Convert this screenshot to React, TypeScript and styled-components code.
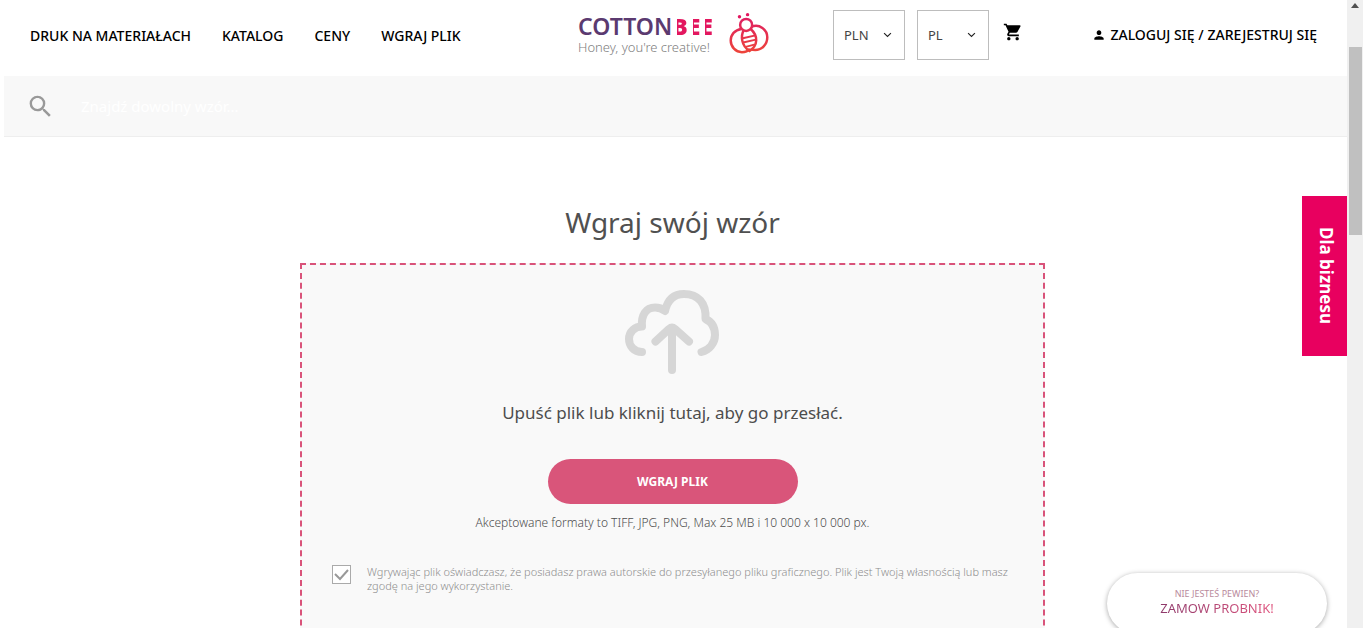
import React from "react";
import styled, { createGlobalStyle } from "styled-components";
import { MdSearch, MdShoppingCart, MdPerson } from "react-icons/md";

const GlobalStyle = createGlobalStyle`
  *, *::before, *::after { box-sizing: border-box; }
  body {
    margin: 0;
    background: #fff;
    color: #4d4d4d;
    font-family: "Noto Sans", "Open Sans", sans-serif;
  }
`;

const Shell = styled.div`
  display: grid;
  grid-template-columns: minmax(0, 1fr) 16px;
  height: 100vh;
  padding: 0 3px 1px 0;
  overflow: hidden;
`;

const Page = styled.div`
  position: relative;
  overflow: hidden;
`;

const Header = styled.header`
  display: grid;
  grid-template-columns: 1fr auto 1fr;
  align-items: center;
  height: 76px;
  padding: 0 30px;
`;

const Nav = styled.nav`
  display: flex;
  gap: 31px;
  padding-bottom: 4px;
`;

const NavLink = styled.a`
  color: #000;
  font-size: 14px;
  font-weight: 500;
  line-height: 20px;
  text-decoration: none;
  white-space: nowrap;
`;

const Logo = styled.a`
  display: flex;
  align-items: center;
  gap: 16px;
  padding-bottom: 9px;
  text-decoration: none;
`;

const Wordmark = styled.span`
  display: flex;
  color: #5b3a70;
  font-size: 23px;
  font-weight: 600;
  line-height: 26px;
`;

const StripedLetters = styled.span`
  display: flex;
  color: transparent;
  font-weight: 900;
`;

const StripedLetter = styled.span`
  background: linear-gradient(90deg, transparent 5px, #e3175f 5px);
  background-clip: text;
  -webkit-background-clip: text;
`;

const Tagline = styled.span`
  display: block;
  color: #808080;
  font-size: 13px;
  font-weight: 300;
  line-height: 16px;
`;

const Tools = styled.div`
  display: flex;
  align-items: center;
  padding: 0 0 6px 64px;
`;

const SelectBox = styled.div`
  position: relative;
  margin-right: 12px;
`;

const Select = styled.select`
  display: block;
  width: 72px;
  height: 50px;
  padding: 0 10px;
  border: 1px solid #bdbdbd;
  border-radius: 0;
  background: #fff;
  color: #444;
  font-family: inherit;
  font-size: 13px;
  font-weight: 400;
  appearance: none;
`;

const Chevron = styled.svg`
  position: absolute;
  top: 22px;
  right: 13px;
  width: 9px;
  height: 6px;
  pointer-events: none;
`;

const CartButton = styled.button`
  display: flex;
  padding: 0 0 6px;
  margin-left: 2px;
  border: 0;
  background: none;
  color: #000;
  font-size: 20px;
`;

const Account = styled.div`
  display: flex;
  align-items: center;
  margin-left: auto;
  gap: 4px;
  color: #000;
  font-size: 14px;
`;

const SearchBar = styled.form`
  display: flex;
  align-items: center;
  gap: 24px;
  height: 61px;
  margin-left: 4px;
  padding: 0 22px;
  border-bottom: 1px solid #eee;
  background: #f8f8f8;
  color: #999;
  font-size: 29px;
`;

const SearchInput = styled.input`
  flex: 1;
  border: 0;
  background: none;
  color: #555;
  font-family: inherit;
  font-size: 15px;
  &::placeholder { color: #fff; opacity: 1; }
`;

const Main = styled.main`
  display: flex;
  flex-direction: column;
  align-items: center;
  padding: 65px 2px 0 0;
`;

const Title = styled.h1`
  margin: 0 0 21px;
  color: #505050;
  font-size: 28px;
  font-weight: 400;
  line-height: 40px;
`;

const DropZone = styled.section`
  display: flex;
  flex-direction: column;
  align-items: center;
  width: 100%;
  max-width: 745px;
  padding: 24px 30px 80px;
  border: 2px dashed #d9537a;
  background: #f9f9f9;
`;

const DropHint = styled.p`
  margin: 26px 0 34px;
  font-size: 17px;
  line-height: 24px;
`;

const UploadButton = styled.button`
  width: 250px;
  height: 45px;
  border: 0;
  border-radius: 23px;
  background: #d9557a;
  color: #fff;
  font-family: inherit;
  font-size: 12px;
  font-weight: 700;
`;

const Formats = styled.p`
  margin: 9px 0 32px;
  font-size: 12px;
  font-weight: 300;
  line-height: 20px;
`;

const Consent = styled.label`
  display: flex;
  align-self: stretch;
  gap: 16px;
  color: #8e8e8e;
  font-size: 11px;
  font-weight: 300;
  line-height: 14px;
`;

const CheckFrame = styled.span`
  position: relative;
  flex: none;
  width: 19px;
  height: 19px;
`;

const Checkbox = styled.input`
  display: block;
  width: 19px;
  height: 19px;
  margin: 0;
  border: 1px solid #aaa;
  background: #fff;
  appearance: none;
`;

const Tick = styled.svg`
  position: absolute;
  inset: 0;
  pointer-events: none;
  visibility: hidden;
  ${Checkbox}:checked + & { visibility: visible; }
`;

const BusinessTab = styled.a`
  position: absolute;
  top: 196px;
  right: 0;
  display: flex;
  align-items: center;
  justify-content: center;
  width: 45px;
  height: 160px;
  padding-left: 4px;
  background: #e8005f;
  color: #fff;
  font-size: 17px;
  font-weight: 700;
  text-decoration: none;
  writing-mode: vertical-rl;
`;

const SampleOffer = styled.a`
  position: absolute;
  right: 20px;
  bottom: -6px;
  display: flex;
  flex-direction: column;
  align-items: center;
  width: 220px;
  height: 61px;
  padding-top: 14px;
  border-radius: 31px;
  background: #fff;
  box-shadow: 0 1px 5px rgba(0, 0, 0, 0.35);
  text-decoration: none;
`;

const OfferLead = styled.span`
  color: #b98a9c;
  font-size: 9px;
  line-height: 13px;
`;

const OfferText = styled.span`
  background: linear-gradient(90deg, #8e3a6b, #e0557f);
  background-clip: text;
  -webkit-background-clip: text;
  color: transparent;
  font-size: 13px;
  line-height: 17px;
`;

const ScrollTrack = styled.div`
  display: flex;
  flex-direction: column;
  align-items: center;
  padding-top: 3px;
  background: #f0f0f0;
`;

const ScrollThumb = styled.div`
  width: 13px;
  height: 30%;
  margin-top: 39px;
  background: #c0c0c0;
`;

const navItems = ["DRUK NA MATERIAŁACH", "KATALOG", "CENY", "WGRAJ PLIK"];

function Picker({ label, options }: { label: string; options: string[] }) {
  return (
    <SelectBox>
      <Select aria-label={label}>
        {options.map((option) => (
          <option key={option}>{option}</option>
        ))}
      </Select>
      <Chevron viewBox="0 0 10 7" aria-hidden="true">
        <path d="M1 1.2 5 5.2 9 1.2" fill="none" stroke="#222" strokeWidth="1.3" />
      </Chevron>
    </SelectBox>
  );
}

function BeeMark() {
  return (
    <svg width="40" height="43" viewBox="0 0 42 44" fill="none" aria-hidden="true">
      <defs>
        <linearGradient id="bee" gradientUnits="userSpaceOnUse" x1="0" y1="0" x2="0" y2="44">
          <stop offset="0" stopColor="#dc1a68" />
          <stop offset="1" stopColor="#ee4638" />
        </linearGradient>
      </defs>
      <g stroke="url(#bee)" strokeWidth="2.6">
        <circle cx="18" cy="13" r="6.3" />
        <path d="M13 17.200C6 18 1.800 23.400 1.800 29.400C1.800 36 7 41.600 13.500 41.600C17 41.600 20.200 40.200 22 38" />
        <path d="M23.500 15C32 11.500 40.200 18 40.200 26C40.200 33.600 34.300 39.400 27.600 39.400C25.500 39.400 24 39 22.500 38.200" />
        <path d="M15.500 18.500C12.200 24.500 12.600 34.500 21.500 40.400C30.600 34.500 30.800 24.500 22.800 17.300" />
        <path d="M14.500 27 27.800 24M14.800 31.500 28.200 28.500M17.500 36 26.500 33.600" strokeWidth="2" />
      </g>
      <circle cx="11" cy="4.500" r="1.800" fill="#e3175f" />
      <circle cx="19.500" cy="2.200" r="1.800" fill="#e3175f" />
    </svg>
  );
}

function CloudUpload() {
  return (
    <svg width="98" height="86" viewBox="0 0 98 86" fill="none" stroke="#d6d6d6" strokeWidth="8" strokeLinecap="round" strokeLinejoin="round" aria-hidden="true">
      <path d="M18 63C10 63 5 57 5 50C5 42.500 11 37.500 18 37.500C17 26 22 18.500 31 18.500C35 18.500 38 19.500 41 22C43.500 11 50 5 60 5C74 5 82.500 14 81.500 30C88 33 91 39 91 46C91 54.500 85 61 77.500 63" />
      <path d="M48 81V42M31.500 52.500 45 40Q48 37.500 51 40L65 52.500" />
    </svg>
  );
}

export default function App() {
  return (
    <>
      <GlobalStyle />
      <Shell>
        <Page>
          <Header>
            <Nav>
              {navItems.map((item) => (
                <NavLink key={item} href="#">{item}</NavLink>
              ))}
            </Nav>
            <Logo href="#">
              <span>
                <Wordmark>
                  COTTON
                  <StripedLetters>
                    <StripedLetter>B</StripedLetter>
                    <StripedLetter>E</StripedLetter>
                    <StripedLetter>E</StripedLetter>
                  </StripedLetters>
                </Wordmark>
                <Tagline>Honey, you're creative!</Tagline>
              </span>
              <BeeMark />
            </Logo>
            <Tools>
              <Picker label="Waluta" options={["PLN", "EUR"]} />
              <Picker label="Język" options={["PL", "EN"]} />
              <CartButton type="button" aria-label="Koszyk"><MdShoppingCart /></CartButton>
              <Account>
                <MdPerson />
                <NavLink href="#">ZALOGUJ SIĘ /</NavLink>
                <NavLink href="#">ZAREJESTRUJ SIĘ</NavLink>
              </Account>
            </Tools>
          </Header>
          <SearchBar role="search">
            <MdSearch aria-hidden="true" />
            <SearchInput aria-label="Szukaj" placeholder="Znajdź dowolny wzór..." />
          </SearchBar>
          <Main>
            <Title>Wgraj swój wzór</Title>
            <DropZone>
              <CloudUpload />
              <DropHint>Upuść plik lub kliknij tutaj, aby go przesłać.</DropHint>
              <UploadButton type="button">WGRAJ PLIK</UploadButton>
              <Formats>Akceptowane formaty to TIFF, JPG, PNG, Max 25 MB i 10 000 x 10 000 px.</Formats>
              <Consent>
                <CheckFrame>
                  <Checkbox type="checkbox" defaultChecked />
                  <Tick viewBox="0 0 19 19" aria-hidden="true">
                    <path d="M3 9 8 14 16 5" fill="none" stroke="#999" strokeWidth="2" />
                  </Tick>
                </CheckFrame>
                <span>
                  Wgrywając plik oświadczasz, że posiadasz prawa autorskie do przesyłanego pliku graficznego. Plik jest Twoją własnością lub masz zgodę na jego wykorzystanie.
                </span>
              </Consent>
            </DropZone>
          </Main>
          <BusinessTab href="#">Dla biznesu</BusinessTab>
          <SampleOffer href="#">
            <OfferLead>NIE JESTEŚ PEWIEN?</OfferLead>
            <OfferText>ZAMOW PROBNIK!</OfferText>
          </SampleOffer>
        </Page>
        <ScrollTrack aria-hidden="true">
          <svg width="8" height="5" viewBox="0 0 8 5"><path d="M0 5 4 0 8 5Z" fill="#505050" /></svg>
          <ScrollThumb />
        </ScrollTrack>
      </Shell>
    </>
  );
}
